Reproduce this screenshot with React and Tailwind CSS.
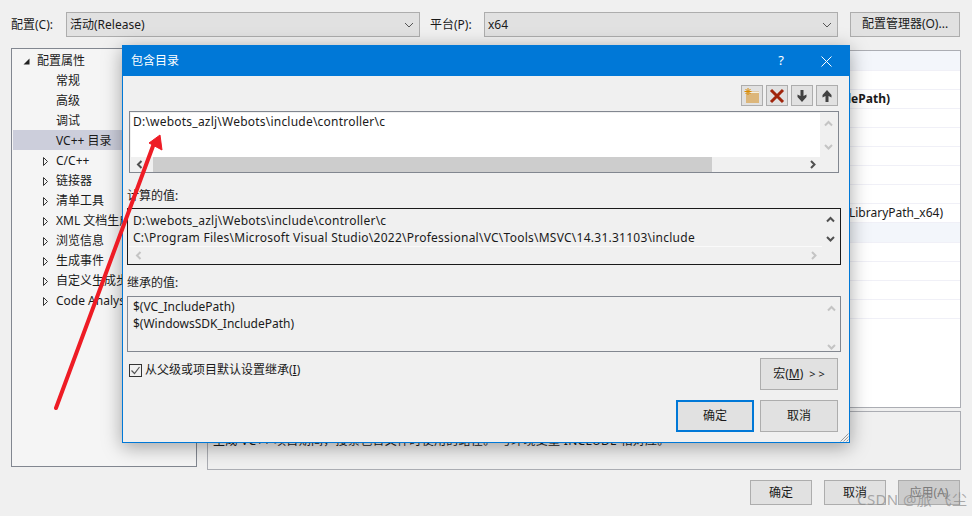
import React from "react";

const FONT = "font-['Noto_Sans','Noto_Sans_CJK_SC',sans-serif]";

function Chevron({ dir = "down", color = "#606060", size = 9, w = 2 }) {
  const d = {
    down: "M1 3 L4.5 6.5 L8 3",
    up: "M1 6.5 L4.5 3 L8 6.5",
    left: "M6.5 1 L3 4.5 L6.5 8",
    right: "M3 1 L6.5 4.5 L3 8",
  }[dir];
  return (
    <svg width={size} height={size} viewBox="0 0 9 9" fill="none">
      <path d={d} stroke={color} strokeWidth={w} />
    </svg>
  );
}

function Combo({ text, width }) {
  return (
    <div className={`${width} h-[25px] bg-[#e1e1e1] border border-[#adadad] flex items-center justify-between pl-[3px] pr-[5px] text-[12px]`}>
      <span>{text}</span>
      <svg width="10" height="6" viewBox="0 0 10 6" fill="none">
        <path d="M1 1 L5 5 L9 1" stroke="#555" strokeWidth="1" />
      </svg>
    </div>
  );
}

function TreeClosed({ label }) {
  return (
    <div className="h-[20px] pt-[2px] flex items-center whitespace-nowrap pl-[30px]">
      <svg width="5" height="9" viewBox="0 0 5 9" className="shrink-0">
        <path d="M0.5 0.5 L4.5 4.5 L0.5 8.5 Z" fill="none" stroke="#333" />
      </svg>
      <span className="ml-[8px]">{label}</span>
    </div>
  );
}

function GridRow({ text, pr, band, bold, h = "h-[19px]" }) {
  return (
    <div className={`${h} shrink-0 flex items-center justify-end border-b border-[#f0f0f7] whitespace-nowrap ${band ? "bg-[#f3f6fb]" : "bg-white"} ${bold ? "font-bold" : ""}`} style={{ paddingRight: pr }}>
      {text}
    </div>
  );
}

function Btn({ children, className = "" }) {
  return (
    <div className={`bg-[#e1e1e1] border border-[#adadad] flex items-center justify-center text-[12px] ${className}`}>
      {children}
    </div>
  );
}

function ToolBtn({ children }) {
  return (
    <div className="w-[22px] h-[21px] bg-[#e1e1e1] border border-[#adadad] flex items-center justify-center">
      {children}
    </div>
  );
}

export default function App() {
  const treeItems = ["C/C++", "链接器", "清单工具", "XML 文档生成器", "浏览信息", "生成事件", "自定义生成步骤", "Code Analysis"];
  return (
    <div className={`relative w-[972px] h-[516px] overflow-hidden bg-[#f0f0f0] text-[12px] text-[#1a1a1a] ${FONT}`}>
      {/* top bar */}
      <div className="flex items-center h-[25px] mt-[12px] pl-[11px]">
        <span className="w-[55px]">配置(C):</span>
        <Combo text="活动(Release)" width="w-[354px]" />
        <span className="w-[54px] ml-[10px]">平台(P):</span>
        <Combo text="x64" width="w-[354px]" />
        <Btn className="w-[110px] h-[25px] ml-[12px] -mt-[1px]">配置管理器(O)...</Btn>
      </div>

      {/* main */}
      <div className="flex items-start gap-[10px] pl-[11px] mt-[11px]">
        <div className="w-[186px] h-[419px] bg-[#f5f5f5] border border-[#828790] pt-[1px] px-[1px] overflow-hidden">
          <div className="h-[20px] pt-[2px] flex items-center pl-[10px]">
            <svg width="7" height="7" viewBox="0 0 7 7" className="shrink-0">
              <path d="M6.5 0.5 V6.5 H0.5 Z" fill="#222" />
            </svg>
            <span className="ml-[7px]">配置属性</span>
          </div>
          {["常规", "高级", "调试"].map((t) => (
            <div key={t} className="h-[20px] pt-[2px] flex items-center pl-[43px]">{t}</div>
          ))}
          <div className="h-[20px] pt-[2px] flex items-center pl-[43px] bg-[#cccedb]">VC++ 目录</div>
          {treeItems.map((t) => (
            <TreeClosed key={t} label={t} />
          ))}
        </div>
        <div className="w-[754px] mt-[2px]">
          <div className="h-[358px] bg-white border border-[#abadb3] overflow-hidden flex flex-col">
            <GridRow band h="h-[20px]" text="" pr={0} />
            <GridRow text="" pr={0} />
            <GridRow text="$(VC_IncludePath);$(WindowsSDK_IncludePath)" pr={70} bold />
            <GridRow text="" pr={0} />
            <GridRow text="" pr={0} />
            <GridRow text="" pr={0} />
            <GridRow text="" pr={0} />
            <GridRow text="" pr={0} />
            <GridRow text="$(VC_LibraryPath_x64);$(WindowsSDK_LibraryPath_x64)" pr={17} />
            <GridRow band h="h-[20px]" text="" pr={0} />
            <GridRow text="" pr={0} />
            <GridRow text="" pr={0} />
            <GridRow text="" pr={0} />
            <GridRow text="" pr={0} />
          </div>
          <div className="h-[59px] mt-[3px] border border-[#abadb3] pl-[5px] pt-[4px] leading-[17px]">
            <div className="font-bold">包含目录</div>
            <div className="-mt-[1px] whitespace-nowrap tracking-[0.3px]">生成 VC++ 项目期间，搜索包含文件时使用的路径。 与环境变量 INCLUDE 相对应。</div>
          </div>
        </div>
      </div>

      {/* bottom buttons */}
      <div className="flex justify-end gap-[12px] pr-[12px] mt-[10px]">
        <Btn className="w-[62px] h-[25px]">确定</Btn>
        <Btn className="w-[62px] h-[25px]">取消</Btn>
        <Btn className="w-[62px] h-[25px] !bg-[#cccccc] text-[#7a7a7a]">应用(A)</Btn>
      </div>

      {/* dialog */}
      <div className="absolute left-[122px] top-[45px] w-[728px] h-[398px] bg-[#f0f0f0] border border-[#0078d7] shadow-[0_4px_18px_rgba(0,0,0,0.35)] flex flex-col">
        <div className="h-[30px] shrink-0 bg-[#0078d7] text-white flex items-center pl-[8px] pr-[17px]">
          <span className="text-[12px]">包含目录</span>
          <span className="ml-auto mr-[37px] text-[13px]">?</span>
          <svg width="11" height="11" viewBox="0 0 11 11" fill="none">
            <path d="M0.5 0.5 L10.5 10.5 M10.5 0.5 L0.5 10.5" stroke="#fff" strokeWidth="1" />
          </svg>
        </div>
        <div className="flex-1 pl-[4px] pr-[8px] pt-[9px] flex flex-col">
          {/* toolbar */}
          <div className="flex justify-end gap-[3px] pr-[3px]">
            <ToolBtn>
              <svg width="16" height="16" viewBox="0 0 16 16">
                <path d="M2 5 H7 V3.5 H15 V15 H2 Z" fill="#dcb67a" />
                <path d="M7 4 H15 V5 H7 Z" fill="#f5f0e0" />
                <path d="M4 0 V7 M0.5 3.5 H7.5 M1.5 1 L6.5 6 M6.5 1 L1.5 6" stroke="#d98a00" strokeWidth="1" />
              </svg>
            </ToolBtn>
            <ToolBtn>
              <svg width="16" height="16" viewBox="0 0 16 16">
                <path d="M2 2 L14 14 M14 2 L2 14" stroke="#a1260d" strokeWidth="3" />
              </svg>
            </ToolBtn>
            <ToolBtn>
              <svg width="12" height="14" viewBox="0 0 12 14">
                <path d="M4.5 1 H7.5 V7 L10.5 5.5 V8 L6 13 L1.5 8 V5.5 L4.5 7 Z" fill="#424242" />
              </svg>
            </ToolBtn>
            <ToolBtn>
              <svg width="12" height="14" viewBox="0 0 12 14">
                <path d="M4.5 13 H7.5 V7 L10.5 8.5 V6 L6 1 L1.5 6 V8.5 L4.5 7 Z" fill="#424242" />
              </svg>
            </ToolBtn>
          </div>

          {/* editor */}
          <div className="mx-[2px] mt-[5px] h-[62px] border border-[#828790] bg-[#f0f0f0] pl-[1px] pt-[1px] pr-[1px] flex flex-col">
            <div className="flex h-[44px]">
              <div className="flex-1 bg-white pl-[2px] leading-[17px] whitespace-nowrap tracking-[0.22px]">D:\webots_azlj\Webots\include\controller\c</div>
              <div className="w-[17px] flex flex-col items-center justify-between py-[6px]">
                <Chevron dir="up" color="#c4c4c4" />
                <Chevron dir="down" color="#c4c4c4" />
              </div>
            </div>
            <div className="flex h-[15px] items-center">
              <div className="w-[22px] flex justify-start pl-[4px]"><Chevron dir="left" color="#505050" /></div>
              <div className="w-[559px] h-[15px] bg-[#cdcdcd]" />
              <div className="flex-1 flex justify-end pr-[20px]"><Chevron dir="right" color="#505050" /></div>
            </div>
          </div>

          <div className="h-[16px] leading-[16px] mt-[15px]">计算的值:</div>
          {/* computed */}
          <div className="mt-[4px] h-[57px] border border-[#1a1a1a] flex flex-col pl-[1px]">
            <div className="flex h-[38px]">
              <div className="flex-1 bg-[#f0f0f0] border-b border-[#fafafa] pl-[4px] pt-[3px] leading-[17px] whitespace-nowrap tracking-[0.25px]">
                <div>D:\webots_azlj\Webots\include\controller\c</div>
                <div>C:\Program Files\Microsoft Visual Studio\2022\Professional\VC\Tools\MSVC\14.31.31103\include</div>
              </div>
              <div className="w-[17px] mr-[1px] flex flex-col items-center justify-between pt-[6px] pb-[4px] bg-[#f0f0f0]">
                <Chevron dir="up" color="#505050" />
                <Chevron dir="down" color="#505050" />
              </div>
            </div>
            <div className="flex flex-1 items-center justify-between pl-[5px] pr-[22px]">
              <Chevron dir="left" color="#c4c4c4" />
              <Chevron dir="right" color="#c4c4c4" />
            </div>
          </div>

          <div className="h-[16px] leading-[16px] mt-[10px]">继承的值:</div>
          {/* inherited */}
          <div className="mt-[5px] h-[56px] border border-[#828790] flex pl-[5px] pt-[1px]">
            <div className="flex-1 leading-[17px] whitespace-nowrap">
              <div>$(VC_IncludePath)</div>
              <div>$(WindowsSDK_IncludePath)</div>
            </div>
            <div className="w-[18px] flex flex-col items-center justify-between pt-[6px]">
              <Chevron dir="up" color="#c4c4c4" />
              <Chevron dir="down" color="#c4c4c4" />
            </div>
          </div>

          {/* checkbox + macro */}
          <div className="flex justify-between items-start pl-[2px] pr-[3px] mt-[6px]">
            <div className="flex items-center gap-[3px] mt-[3px]">
              <div className="w-[13px] h-[13px] border border-[#333] bg-[#f0f0f0] flex items-center justify-center">
                <svg width="11" height="11" viewBox="0 0 11 11" fill="none">
                  <path d="M1.5 5.5 L4.5 8.5 L9.5 2" stroke="#555" strokeWidth="1.2" />
                </svg>
              </div>
              <span>从父级或项目默认设置继承(<span className="underline">I</span>)</span>
            </div>
            <Btn className="w-[78px] h-[32px] gap-[6px]">
              <span>宏(<span className="underline">M</span>)</span>
              <span className="text-[11px]">&gt; &gt;</span>
            </Btn>
          </div>

          {/* ok / cancel */}
          <div className="flex justify-end gap-[6px] pr-[3px] mt-[10px]">
            <Btn className="w-[78px] h-[32px] !border-2 !border-[#0078d7]">确定</Btn>
            <Btn className="w-[78px] h-[32px]">取消</Btn>
          </div>
        </div>
        {/* resize grip */}
        <svg width="9" height="9" viewBox="0 0 9 9" className="absolute right-0 bottom-0">
          <path d="M8.5 0.5 L0.5 8.5 M8.5 3.5 L3.5 8.5 M8.5 6.5 L6.5 8.5" stroke="#9a9a9a" strokeWidth="1" />
        </svg>
      </div>

      {/* red arrow annotation */}
      <svg width="972" height="516" viewBox="0 0 972 516" className="absolute left-0 top-0 pointer-events-none">
        <path d="M56 408 L153 146" stroke="#ee1c25" strokeWidth="4" strokeLinecap="round" fill="none" />
        <path d="M160 135 L162 150 L149 143 Z" fill="#ee1c25" stroke="#ee1c25" strokeWidth="1" />
      </svg>

      {/* watermark */}
      <div className="absolute left-[857px] top-[489px] text-[15px] leading-[20px] tracking-[0.4px] text-[#8a8a8a]/70 whitespace-nowrap">CSDN @旅 飞尘</div>
    </div>
  );
}
